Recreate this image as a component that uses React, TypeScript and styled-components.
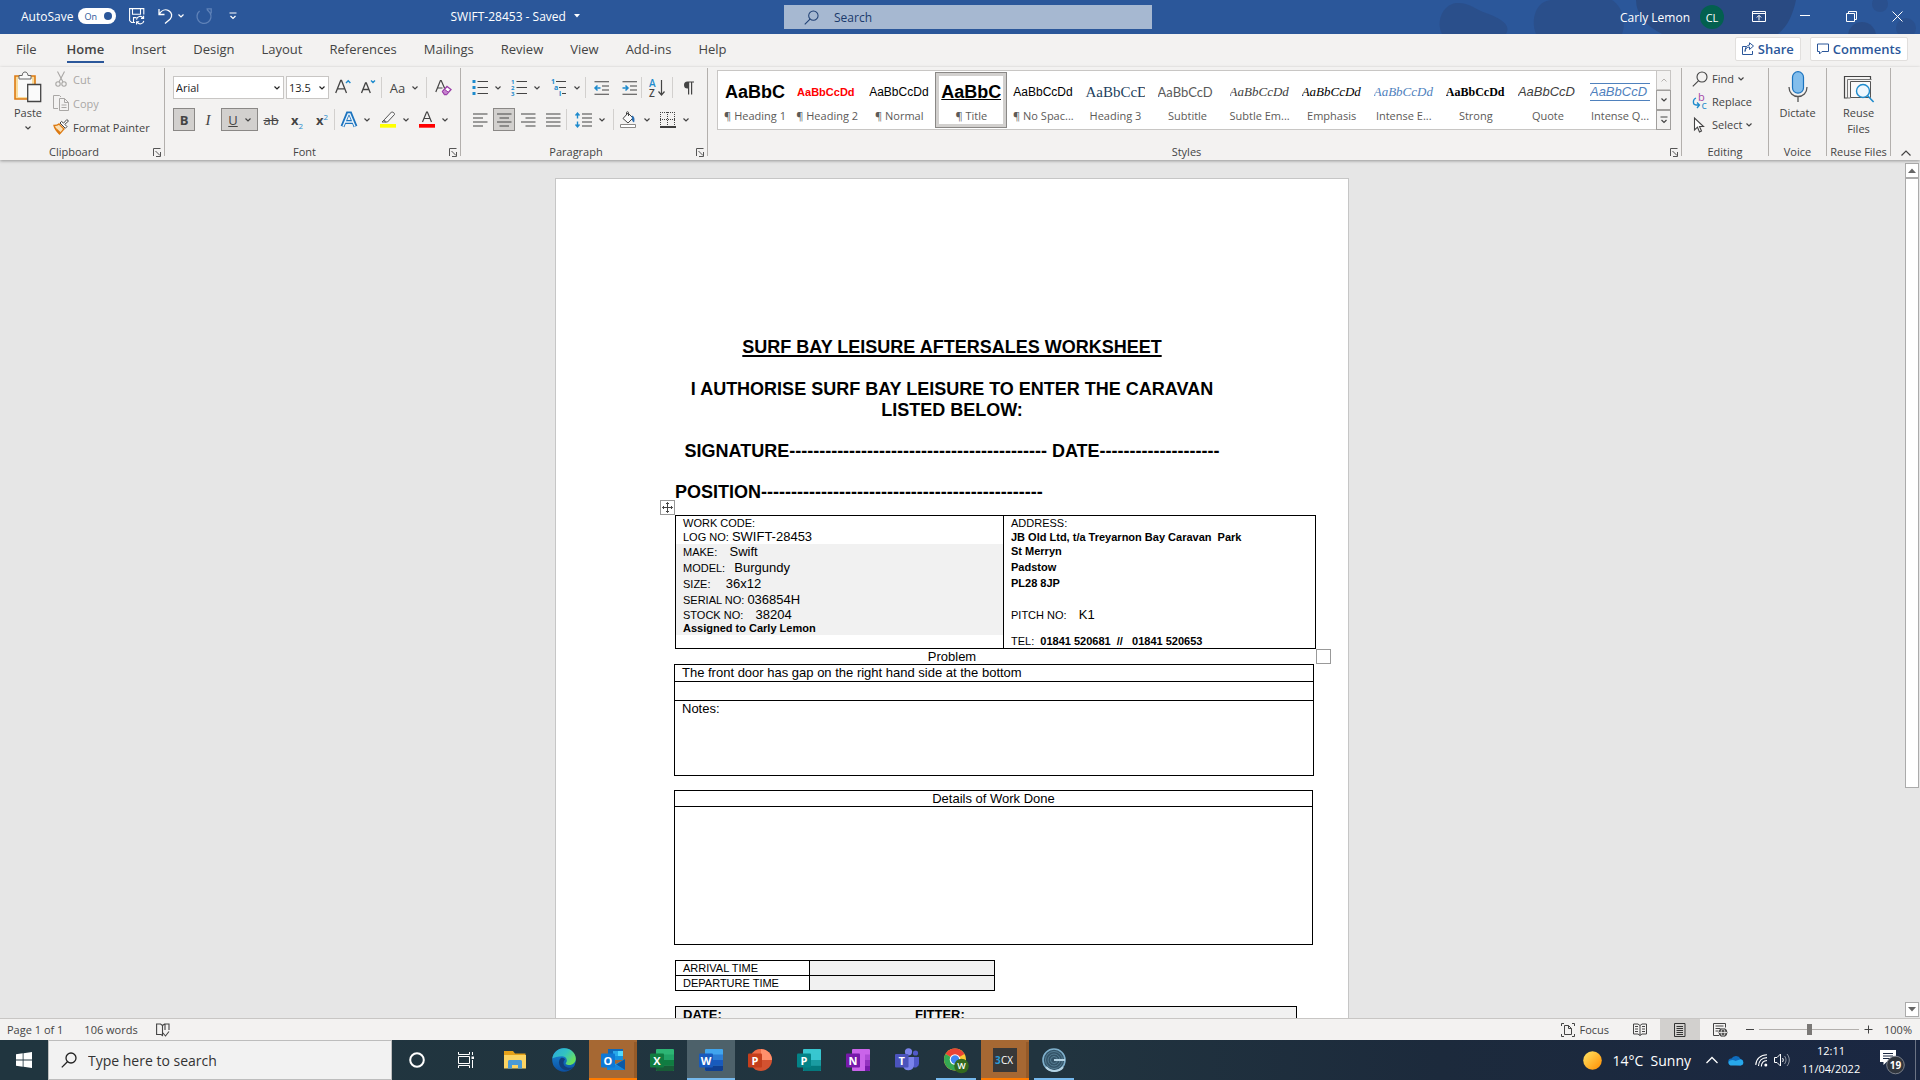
import React from 'react';
import styled, { createGlobalStyle, css } from 'styled-components';

const UI = '"Segoe UI", "Open Sans", "Noto Sans", sans-serif';
const DOC = 'Arial, "Liberation Sans", sans-serif';
const SERIF = '"Liberation Serif", "Times New Roman", serif';
const BLUE = '#2b579a';
const ICON_BLUE = '#1e8bcd';
const INK = '#444444';

const Global = createGlobalStyle`
  *, *::before, *::after { box-sizing: border-box; }
  html, body { margin: 0; padding: 0; }
  body { font-family: ${UI}; font-size: 12px; color: ${INK}; overflow: hidden; }
  button, select, input { font: inherit; color: inherit; margin: 0; }
  button { border: 0; background: none; padding: 0; cursor: default; }
  svg { display: block; flex: none; overflow: visible; }
  p, h1 { margin: 0; }
`;

const Screen = styled.div`
  display: flex;
  flex-direction: column;
  height: 100vh;
`;

/* ---------- title bar ---------- */

const TitleBar = styled.header`
  position: relative;
  display: grid;
  grid-template-columns: 784fr 368fr 768fr;
  align-items: center;
  height: 34px;
  flex: none;
  overflow: hidden;
  background: ${BLUE};
  color: #fff;
`;

const TitleArt = styled.svg`
  position: absolute;
  top: 0;
  right: 0;
`;

const TitleLeft = styled.div`
  display: flex;
  align-items: center;
  padding: 0 8px 2px 21px;
`;

const AutoSave = styled.label`
  display: flex;
  align-items: center;
  gap: 5px;
  margin-right: 12px;
  input {
    position: absolute;
    opacity: 0;
    width: 38px;
    height: 16px;
  }
`;

const Switch = styled.span`
  display: flex;
  align-items: center;
  justify-content: space-between;
  width: 38px;
  height: 16px;
  padding: 0 4px 0 6px;
  border-radius: 8px;
  background: #fff;
  color: ${BLUE};
  font-size: 9px;
  &::after {
    content: '';
    width: 8px;
    height: 8px;
    border-radius: 50%;
    background: ${BLUE};
  }
`;

const QuickButton = styled.button<{ $w: number }>`
  display: flex;
  align-items: center;
  justify-content: center;
  gap: 5px;
  width: ${(p) => p.$w}px;
  height: 32px;
`;

const DocName = styled.button`
  display: flex;
  flex: 1;
  align-items: center;
  justify-content: center;
  gap: 8px;
  height: 32px;
  font-size: 12px;
  white-space: pre;
`;

const SearchBox = styled.label`
  display: flex;
  align-items: center;
  gap: 15px;
  height: 24px;
  padding-left: 20px;
  background: #a6b8d1;
  color: #1f3f73;
  input {
    flex: 1;
    min-width: 0;
    border: 0;
    padding: 0;
    outline: 0;
    background: none;
    font-size: 12px;
  }
  input::placeholder {
    color: #1b3a6c;
    opacity: 1;
  }
`;

const TitleRight = styled.div`
  position: relative;
  display: flex;
  align-items: center;
  justify-content: flex-end;
`;

const Avatar = styled.span`
  display: grid;
  place-items: center;
  width: 24px;
  height: 24px;
  margin: 0 12px 0 10px;
  border-radius: 50%;
  background: #03604f;
  font-size: 11px;
`;

const WindowButton = styled.button`
  display: grid;
  place-items: center;
  width: 46px;
  height: 32px;
  padding-bottom: 2px;
`;

/* ---------- tab strip ---------- */

const TabStrip = styled.nav`
  display: flex;
  align-items: center;
  flex: none;
  height: 33px;
  padding: 0 12px 2px 2px;
  background: #f3f2f1;
`;

const Tab = styled.button<{ $active?: boolean }>`
  height: 27px;
  margin: 0 13px 0 14px;
  font-size: 13px;
  line-height: 24px;
  border-bottom: 2px solid transparent;
  ${(p) =>
    p.$active &&
    css`
      margin-left: 17px;
      font-weight: 600;
      border-bottom-color: ${BLUE};
    `}
`;

const TabActions = styled.div`
  display: flex;
  gap: 9px;
  margin: 0 0 2px auto;
`;

const ActionButton = styled.button`
  display: flex;
  align-items: center;
  gap: 4px;
  height: 24px;
  padding: 0 6px;
  border: 1px solid #e1dfdd;
  border-radius: 2px;
  background: #fff;
  color: ${BLUE};
  font-size: 13px;
  font-weight: 600;
`;

/* ---------- ribbon ---------- */

const Ribbon = styled.section`
  position: relative;
  display: flex;
  flex: none;
  height: 93px;
  padding-top: 1px;
  background: #f3f2f1;
  box-shadow: 0 1px 3px rgba(0, 0, 0, 0.35);
  z-index: 1;
`;

const Group = styled.div<{ $w?: number }>`
  display: flex;
  flex-direction: column;
  ${(p) => (p.$w ? `flex: none; width: ${p.$w}px;` : 'flex: 1; min-width: 0;')}
  height: 88px;
  border-right: 1px solid #b3b0ad;
`;

const GroupBody = styled.div<{ $pad?: string }>`
  display: flex;
  flex: none;
  height: 76px;
  padding: ${(p) => p.$pad || '0'};
`;

const GroupFoot = styled.div<{ $launch?: boolean }>`
  position: relative;
  flex: none;
  height: 16px;
  padding-right: ${(p) => (p.$launch ? 16 : 0)}px;
  font-size: 11px;
  line-height: 16px;
  text-align: center;
  white-space: nowrap;
`;

const Launcher = styled.button`
  position: absolute;
  right: 3px;
  top: 4px;
`;

const Stack = styled.div<{ $gap?: number }>`
  display: flex;
  flex-direction: column;
  gap: ${(p) => p.$gap || 0}px;
`;

const Line = styled.div`
  display: flex;
  align-items: center;
  height: 23px;
`;

const Divider = styled.span`
  width: 1px;
  height: 21px;
  background: #d2d0ce;
`;

const BigButton = styled.button<{ $w: number }>`
  display: flex;
  flex-direction: column;
  align-items: center;
  width: ${(p) => p.$w}px;
  padding-top: 3px;
  font-size: 11px;
  line-height: 16px;
  svg + span { margin-top: 2px; }
  span + svg { margin-top: 4px; }
`;

const SmallButton = styled.button<{ $off?: boolean; $h: number }>`
  display: flex;
  align-items: center;
  gap: 4px;
  height: ${(p) => p.$h}px;
  padding-bottom: 2px;
  font-size: 11px;
  white-space: nowrap;
  color: ${(p) => (p.$off ? '#a9a7a5' : INK)};
`;

const Tool = styled.button<{ $w: number; $on?: boolean }>`
  display: flex;
  align-items: center;
  justify-content: center;
  gap: 7px;
  width: ${(p) => p.$w}px;
  height: 23px;
  font-size: 13px;
  line-height: 20px;
  ${(p) =>
    p.$on &&
    css`
      background: #d2d0ce;
      border: 1px solid #8a8886;
    `}
  i { font-family: ${SERIF}; font-size: 15px; }
  sub, sup {
    font-size: 8px;
    line-height: 0;
    color: ${ICON_BLUE};
  }
`;

const Combo = styled.label<{ $w: number }>`
  display: flex;
  align-items: center;
  width: ${(p) => p.$w}px;
  height: 23px;
  margin-right: 2px;
  padding: 0 3px 0 2px;
  border: 1px solid #c8c6c4;
  background: #fff;
  color: #222;
  select {
    flex: 1;
    min-width: 0;
    border: 0;
    padding: 0;
    outline: 0;
    appearance: none;
    background: none;
    font-size: 11px;
  }
`;

const Gallery = styled.div`
  display: flex;
  align-self: flex-start;
  flex: 1;
  min-width: 0;
  height: 60px;
  border: 1px solid #c8c6c4;
  background: #fff;
`;

const StyleList = styled.div`
  display: flex;
  flex: 1;
  min-width: 0;
  padding: 1px;
`;

const StyleCell = styled.button<{ $on?: boolean }>`
  display: flex;
  flex: 1 1 0;
  min-width: 0;
  flex-direction: column;
  align-items: center;
  justify-content: flex-start;
  padding: 8px 0 0;
  font-size: 11px;
  color: #5c5a58;
  ${(p) =>
    p.$on &&
    css`
      box-shadow: inset 0 0 0 1px #8a8886, inset 0 0 0 4px #d2d0ce;
    `}
`;

const Sample = styled.span<{ $rule?: boolean }>`
  display: block;
  width: 60px;
  height: 24px;
  line-height: 24px;
  overflow: hidden;
  white-space: nowrap;
  text-align: left;
  ${(p) =>
    p.$rule &&
    css`
      height: 18px;
      line-height: 16px;
      margin: 3px 0;
      border-top: 1px solid #4f81bd;
      border-bottom: 1px solid #4f81bd;
    `}
`;

const CellName = styled.span`
  margin-top: 4px;
  line-height: 16px;
  white-space: nowrap;
`;

const GalleryNav = styled.div`
  display: flex;
  flex-direction: column;
  width: 15px;
  margin: -1px;
  button {
    display: grid;
    place-items: center;
    flex: 1;
    border: 1px solid #a19f9d;
    background: #f3f2f1;
  }
  button:first-child { border-color: #c8c6c4; color: #b3b0ad; }
`;

const Collapse = styled.button`
  display: grid;
  place-items: end center;
  width: 29px;
  padding-bottom: 4px;
`;

/* ---------- document ---------- */

const Workspace = styled.main`
  display: flex;
  flex: 1;
  min-height: 0;
  background: #e6e6e6;
`;

const Canvas = styled.div`
  flex: 1;
  display: flex;
  justify-content: center;
  align-items: flex-start;
  overflow: hidden;
  padding-top: 18px;
`;

const Page = styled.article`
  width: 794px;
  min-height: 1123px;
  flex: none;
  padding: 158px 119px 0;
  border: 1px solid #c6c6c6;
  background: #fff;
  color: #000;
  font-family: ${DOC};
  font-size: 13px;
  line-height: 15px;
`;

const Heading = styled.h1`
  margin-bottom: 21px;
  font-size: 18px;
  line-height: 21px;
  font-weight: 700;
  text-align: center;
  text-decoration: underline;
  text-decoration-thickness: 2px;
  text-underline-offset: 2px;
`;

const Statement = styled.p<{ $left?: boolean; $last?: boolean }>`
  margin-bottom: ${(p) => (p.$last ? 12 : 20)}px;
  font-size: 18px;
  line-height: 21px;
  font-weight: 700;
  text-align: ${(p) => (p.$left ? 'left' : 'center')};
  white-space: ${(p) => (p.$left ? 'nowrap' : 'normal')};
`;

const TableFrame = styled.div<{ $w: number; $out?: boolean; $after?: number }>`
  position: relative;
  width: ${(p) => p.$w}px;
  margin-left: ${(p) => (p.$out ? -1 : 0)}px;
  margin-bottom: ${(p) => p.$after || 0}px;
`;

const Table = styled.table`
  width: 100%;
  border-collapse: collapse;
  table-layout: fixed;
`;

const Cell = styled.td<{ $h?: number; $w?: number; $grey?: boolean; $flush?: boolean; $mid?: boolean; $small?: boolean }>`
  height: ${(p) => (p.$h ? `${p.$h}px` : 'auto')};
  width: ${(p) => (p.$w ? `${p.$w}px` : 'auto')};
  padding: ${(p) => (p.$flush ? '0' : '0 7px')};
  border: 1px solid #000;
  vertical-align: top;
  text-align: ${(p) => (p.$mid ? 'center' : 'left')};
  font-size: ${(p) => (p.$small ? 11 : 13)}px;
  line-height: ${(p) => (p.$small ? 14 : 15)}px;
  ${(p) => p.$grey && 'background: #f1f1f1;'}
`;

const Entry = styled.div<{ $h: number; $grey?: boolean; $bold?: boolean }>`
  display: flex;
  align-items: baseline;
  height: ${(p) => p.$h}px;
  padding: 0 7px;
  line-height: ${(p) => p.$h}px;
  font-size: 11px;
  font-weight: ${(p) => (p.$bold ? 700 : 400)};
  white-space: pre;
  ${(p) => p.$grey && 'background: #f1f1f1;'}
`;

const Value = styled.span`
  font-size: 13px;
`;

const Caption = styled.p`
  height: 15px;
  text-align: center;
`;

const SignOff = styled.div`
  display: grid;
  grid-template-columns: 232px 1fr;
  font-weight: 700;
`;

const Handle = styled.span<{ $end?: boolean }>`
  position: absolute;
  display: grid;
  place-items: center;
  width: 15px;
  height: 15px;
  border: 1px solid #999;
  background: #fff;
  ${(p) => (p.$end ? 'left: 100%; top: 100%;' : 'right: 100%; bottom: 100%;')}
`;

const ScrollBar = styled.div`
  display: flex;
  flex-direction: column;
  width: 16px;
  padding: 3px 1px 1px;
  background: #e6e6e6;
`;

const ScrollButton = styled.button`
  display: grid;
  place-items: center;
  height: 15px;
  border: 1px solid #ababab;
  background: #fff;
`;

const ScrollTrack = styled.div`
  flex: 1;
  background: #e6e6e6;
`;

const ScrollThumb = styled.div`
  height: 74%;
  border: 1px solid #ababab;
  background: #fff;
`;

/* ---------- status bar ---------- */

const StatusBar = styled.footer`
  display: flex;
  align-items: center;
  flex: none;
  height: 22px;
  padding: 0 8px 0 7px;
  border-top: 1px solid #c8c6c4;
  background: #f3f2f1;
  font-size: 11px;
`;

const StatusItem = styled.button<{ $gap?: number }>`
  display: flex;
  align-items: center;
  gap: 4px;
  margin-right: ${(p) => p.$gap || 0}px;
`;

const StatusEnd = styled.div`
  display: flex;
  align-items: center;
  margin-left: auto;
`;

const ViewButton = styled.button<{ $on?: boolean }>`
  display: grid;
  place-items: center;
  width: 40px;
  height: 21px;
  background: ${(p) => (p.$on ? '#d2d0ce' : 'none')};
`;

const Zoom = styled.input`
  appearance: none;
  width: 100px;
  height: 12px;
  margin: 0 5px;
  background: linear-gradient(#b3b0ad, #b3b0ad) center / 100% 1px no-repeat;
  &::-webkit-slider-thumb {
    appearance: none;
    width: 5px;
    height: 11px;
    background: #7a7876;
  }
`;

/* ---------- taskbar ---------- */

const TaskBar = styled.footer`
  display: flex;
  flex: none;
  height: 40px;
  background: linear-gradient(90deg, #20353f 0%, #21343f 55%, #1c2a3c 75%, #1a2742 100%);
  color: #fff;
`;

const Start = styled.button`
  display: grid;
  place-items: center;
  width: 48px;
`;

const TaskSearch = styled.label`
  display: flex;
  align-items: center;
  gap: 11px;
  width: 344px;
  padding-left: 12px;
  border: 1px solid #bdbdbd;
  background: #f2f2f2;
  color: #222;
  input {
    flex: 1;
    min-width: 0;
    border: 0;
    padding: 0;
    outline: 0;
    background: none;
    font-size: 14px;
  }
  input::placeholder { color: #333; opacity: 1; }
`;

const TaskButton = styled.button<{ $tone?: 'alert' | 'active' | 'open' }>`
  display: grid;
  place-items: center;
  width: 48px;
  margin-left: 1px;
  border-bottom: 2px solid transparent;
  border-top: 2px solid transparent;
  ${(p) =>
    p.$tone === 'alert' &&
    css`
      background-color: #a66833;
      border-top-color: #a66833;
      border-bottom-color: #ff7b00;
      box-shadow: inset -3px 0 0 #955a28;
    `}
  ${(p) =>
    p.$tone === 'active' &&
    css`
      background-color: #4d616a;
      border-bottom-color: #76b9ed;
    `}
  ${(p) =>
    p.$tone === 'open' &&
    css`
      background: linear-gradient(#76b9ed, #76b9ed) center bottom / 40px 2px no-repeat border-box;
    `}
`;

const Tray = styled.div`
  display: flex;
  align-items: center;
  margin-left: auto;
`;

const Weather = styled.button`
  display: flex;
  align-items: center;
  gap: 10px;
  margin-right: 14px;
  font-size: 14px;
  white-space: pre;
`;

const TrayIcon = styled.button<{ $w: number }>`
  display: grid;
  place-items: center;
  width: ${(p) => p.$w}px;
  height: 40px;
`;

const Clock = styled.button`
  width: 74px;
  font-size: 11px;
  line-height: 18px;
  text-align: center;
`;

const Notify = styled.button`
  display: grid;
  place-items: center;
  width: 48px;
  height: 40px;
  margin-right: 4px;
  border-right: 1px solid #6b7384;
`;

/* ---------- drawings ---------- */

const Chevron = () => (
  <svg width="6" height="6" viewBox="0 0 6 6" fill="none" stroke="currentColor" strokeWidth="1.2">
    <path d="M.5 1.5 3 4 5.5 1.5" />
  </svg>
);

const Magnifier = ({ size = 15, w = 1.1 }: { size?: number; w?: number }) => (
  <svg width={size} height={size} viewBox="0 0 16 16" fill="none" stroke="currentColor" strokeWidth={w}>
    <circle cx="10" cy="6" r="5" />
    <path d="M6.4 9.8.8 15.4" />
  </svg>
);

const SaveIcon = () => (
  <svg width="16" height="17" viewBox="0 0 16 17" fill="none" stroke="#fff" strokeWidth="1.1">
    <path d="M6 14.5H2.5L.6 12.6V.6h14.2v6M3.5.6v5.6h8V.6M4.5 14.5V9.6h3" />
    <path d="M7.5 11.6a3.6 3.6 0 0 1 6.6-1.6M14.6 7.8v2.6H12M14.8 12.8a3.6 3.6 0 0 1-6.6 1.4M7.6 16.4v-2.6h2.6" />
  </svg>
);

const UndoIcon = () => (
  <svg width="15" height="16" viewBox="0 0 15 16" fill="none" stroke="#fff" strokeWidth="1.3">
    <path d="M1 1v5.500h5.500M1.300 6.200C3.500 2.400 7.200.8 10.600 2.600c3.600 2 4 6 1.400 8.600L7 15.400" />
  </svg>
);

const RedoIcon = () => (
  <svg width="16" height="16" viewBox="0 0 16 16" fill="none" stroke="#5f82b8" strokeWidth="1.3">
    <path d="M10.500.8h4.700v4.600M3.600 3A7 7 0 1 0 14 4.800L11 1.500" />
  </svg>
);

const MoreIcon = () => (
  <svg width="8" height="8" viewBox="0 0 8 8" fill="none" stroke="currentColor" strokeWidth="1.2">
    <path d="M.5 1h7M1.500 4 4 6.500 6.500 4" />
  </svg>
);

const LaunchIcon = () => (
  <svg width="8" height="9" viewBox="0 0 8 9" fill="none" stroke="#555">
    <path d="M.5 8V.5h7M2.500 3l4.500 4.500M7.500 4v4.500H3" />
  </svg>
);

const PasteIcon = () => (
  <svg width="28" height="32" viewBox="0 0 28 32" fill="none">
    <path d="M1 5h20v23H1z" fill="#f9dc9c" stroke="#dd7a12" strokeWidth="1.6" />
    <path d="M4 7h14v19H4z" fill="#fafafa" />
    <path d="M5 8V4.500h3.200C8.400 2 9.400 1 11 1s2.700 1 3 3.500h3V8z" fill="#fafafa" stroke="#666" />
    <path d="M13.700 13.500h13v17h-13z" fill="#fafafa" stroke="#444" strokeWidth="1.300" />
  </svg>
);

const CutIcon = () => (
  <svg width="16" height="16" viewBox="0 0 16 16" fill="none" stroke="#a9a7a5" strokeWidth="1.100">
    <path d="M4.500 0.500 10 11M11.500 0.500 6 11" />
    <circle cx="5" cy="13" r="2.200" />
    <circle cx="11" cy="13" r="2.200" />
  </svg>
);

const CopyIcon = () => (
  <svg width="16" height="16" viewBox="0 0 16 16" fill="none" stroke="#a9a7a5">
    <path d="M5 13.500H.5V.5h6l1.500 1.500" />
    <path d="M6.500 3.500h5l4 4v8h-9zM11.500 3.500v4h4M8.500 10h5M8.500 12.500h5" />
  </svg>
);

const PainterIcon = () => (
  <svg width="16" height="16" viewBox="0 0 16 16" fill="none">
    <path d="M1 6.500c3 0 4-.5 5-1.500l5 5c-1 1-2 2.500-4.500 5C4.500 13 2 10.500 1 6.500z" fill="#fbe0b4" stroke="#dd7a12" strokeWidth="1.300" />
    <path d="m3 9 5 4.500-1.500 1.500C4.800 13.600 3.600 12 3 9z" fill="#dd7a12" />
    <path d="m7 4 5.300 5.300 1.700-1.700-2.200-2.200L15.500 2 13.800.6 10.500 4.200 8.600 2.400z" fill="#fff" stroke="#444" />
  </svg>
);

const GrowIcon = ({ shrink }: { shrink?: boolean }) => (
  <svg width="16" height="17" viewBox="0 0 16 17" fill="none">
    <path d={shrink ? 'M1.500 14 5.500 4h.8l4 10M3 10.500h6' : 'M.7 14 5.700 1.500h.8L11.500 14M2.500 9.800h7'} stroke={INK} strokeWidth="1.300" />
    <path d={shrink ? 'M11 1.500 13 3.500l2-2' : 'M11 4 13.200 1.800 15.400 4'} stroke={ICON_BLUE} strokeWidth="1.400" />
  </svg>
);

const EraseIcon = () => (
  <svg width="17" height="17" viewBox="0 0 17 17" fill="none">
    <path d="M.8 13 5.400 1.500h.8l3.500 8M2.500 9h5" stroke={INK} strokeWidth="1.200" />
    <path d="m7.500 12.500 4.500-5 4 3-4.500 5h-2z" fill="#fff" stroke="#9b3fa8" strokeWidth="1.300" />
    <path d="m7.500 12.500 2-2.200 4 3-2 2.200h-2z" fill="#c682cf" stroke="#9b3fa8" />
  </svg>
);

const EffectsIcon = () => (
  <svg width="16" height="16" viewBox="0 0 16 16" fill="none">
    <path d="M1.500 14.500 6.800 1.500h2.400l5.300 13M4 10h8" stroke="#1c74bf" strokeWidth="4" />
    <path d="M2 14.500 7.200 2h1.600L14 14.500M4 10h8" stroke="#eaf4fc" strokeWidth="1.400" />
  </svg>
);

const MarkerIcon = () => (
  <svg width="16" height="17" viewBox="0 0 16 17" fill="none">
    <path d="m4.500 8.500 7-7.500c2 0 3 1 3 2.500l-7 7.500H5z M4.500 8.500 2 11h3.500" stroke="#555" fill="#f6f6f6" />
    <path d="M0 13h16v3.700H0z" fill="#ff0" />
  </svg>
);

const ColorIcon = () => (
  <svg width="16" height="17" viewBox="0 0 16 17" fill="none">
    <path d="M3.500 11 7.600 1h.8l4.100 10M5 7.500h6" stroke={INK} strokeWidth="1.200" />
    <path d="M0 13h16v3.700H0z" fill="#f00" />
  </svg>
);

const ListIcon = ({ kind }: { kind: 'dot' | 'num' | 'multi' }) => (
  <svg width="16" height="17" viewBox="0 0 16 17">
    {kind === 'multi' ? (
      <path d="M5 2.500h10M8 8.500h7M11 14.500h4" stroke={INK} strokeWidth="1.200" />
    ) : (
      <path d="M5.500 2.500H16M5.500 8.500H16M5.500 14.500H16" stroke={INK} strokeWidth="1.200" />
    )}
    {kind === 'dot' && <path d="M.5 1h3v3h-3zM.5 7h3v3h-3zM.5 13h3v3h-3z" fill={ICON_BLUE} />}
    {kind === 'num' && (
      <g fill={ICON_BLUE} fontSize="6" fontWeight="700" fontFamily="Open Sans">
        <text x="0" y="5">1</text>
        <text x="0" y="11">2</text>
        <text x="0" y="17">3</text>
      </g>
    )}
    {kind === 'multi' && (
      <g fill={ICON_BLUE} fontSize="7" fontWeight="700" fontFamily="Open Sans">
        <text x="0" y="5">1</text>
        <text x="3" y="11">a</text>
        <text x="8" y="17">i</text>
      </g>
    )}
  </svg>
);

const IndentIcon = ({ out }: { out?: boolean }) => (
  <svg width="15" height="14" viewBox="0 0 15 14" fill="none">
    <path d="M.5 .7H15M8 5H15M8 9H15M.5 13.300H15" stroke={INK} strokeWidth="1.100" />
    <path d={out ? 'M6.500 7H1M3.500 4.500 1 7l2.500 2.500' : 'M.5 7H6M3.500 4.500 6 7 3.500 9.500'} stroke={ICON_BLUE} strokeWidth="1.500" />
  </svg>
);

const SortIcon = () => (
  <svg width="17" height="18" viewBox="0 0 17 18" fontFamily="Open Sans" fontSize="10" fontWeight="600">
    <text x="0" y="8" fill={ICON_BLUE}>A</text>
    <text x="0" y="17.500" fill={INK}>Z</text>
    <path d="M12.500 1v15M9.500 12.500l3 3.500 3-3.500" fill="none" stroke={INK} strokeWidth="1.200" />
  </svg>
);

const PilcrowIcon = () => (
  <svg width="11" height="14" viewBox="0 0 11 14">
    <path d="M11 .5H4.500a3.500 3.500 0 0 0 0 7H5V13.500h1.200V1.600h1.800v11.900h1.200V1.600H11z" fill={INK} />
  </svg>
);

const alignPaths = {
  left: 'M0 1h14.500M0 5h10M0 9h14.500M0 13h10',
  center: 'M0 1h14.500M2.500 5h9.500M0 9h14.500M2.500 13h9.500',
  right: 'M0 1h14.500M4.500 5h10M0 9h14.500M4.500 13h10',
  full: 'M0 1h14.500M0 5h14.500M0 9h14.500M0 13h14.500',
};

const AlignIcon = ({ kind }: { kind: keyof typeof alignPaths }) => (
  <svg width="15" height="14" viewBox="0 0 15 14" stroke={INK} strokeWidth="1.200">
    <path d={alignPaths[kind]} />
  </svg>
);

const SpacingIcon = () => (
  <svg width="17" height="16" viewBox="0 0 17 16" fill="none">
    <path d="M7 2h10M7 6h10M7 10h10M7 14h10" stroke={INK} strokeWidth="1.100" />
    <path d="M2.500 1v5.500M.5 3.500l2-2.500 2 2.500M2.500 9.500V15M.5 12.500l2 2.500 2-2.500" stroke={ICON_BLUE} strokeWidth="1.400" />
  </svg>
);

const BucketIcon = () => (
  <svg width="17" height="17" viewBox="0 0 17 17" fill="none">
    <path d="m3 7.500 5-5.500 5 5-5 5zM6.500 4V1.500c0-1 2-1 2 0V5" stroke="#444" fill="#fafafa" />
    <path d="M12 4.500c2.500 1 3 4 2 7-2-1-2.500-3-2-7z" fill="#2a6db0" />
    <path d="M.5 13.500h15v3H.5z" fill="#fff" stroke="#8a8886" />
  </svg>
);

const BorderIcon = () => (
  <svg width="16" height="16" viewBox="0 0 16 16" fill="none">
    <path d="M0 .5h15M0 7.500h15M.5 0v14M7.500 0v14M14.500 0v14" stroke={INK} strokeDasharray="1 1" />
    <path d="M0 15h16" stroke="#000" strokeWidth="1.500" />
  </svg>
);

const ReplaceIcon = () => (
  <svg width="16" height="17" viewBox="0 0 16 17" fontFamily="Open Sans" fontSize="11">
    <text x="6" y="8" fill="#a347a8">b</text>
    <text x="9.500" y="16" fill={ICON_BLUE}>c</text>
    <path d="M4 5C.5 6.500.5 12 4 12h3M5 9.500 7.500 12 5 15" fill="none" stroke={ICON_BLUE} strokeWidth="1.300" />
  </svg>
);

const PointerIcon = () => (
  <svg width="16" height="16" viewBox="0 0 16 16" fill="none" stroke="#444" strokeWidth="1.100">
    <path d="M2.500 1v12l3-2.800 2 4.800 2-1-2-4.500h4z" fill="#fff" />
  </svg>
);

const MicIcon = () => (
  <svg width="20" height="32" viewBox="0 0 20 32" fill="none">
    <rect x="4.500" y=".7" width="11" height="21.500" rx="5.500" fill="#83beec" stroke="#1c74bf" strokeWidth="1.200" />
    <path d="M1 16c0 6 4 9.500 9 9.500s9-3.500 9-9.500M10 25.500V31" stroke="#555" strokeWidth="1.300" />
  </svg>
);

const ReuseIcon = () => (
  <svg width="30" height="32" viewBox="0 0 30 32" fill="none">
    <path d="M3.500 27h-3V5.500h26v3" stroke="#444" strokeWidth="1.200" />
    <path d="M6.500 27h-3V8.500h24" stroke="#777" />
    <path d="M6.500 10.500h20v16h-20z" fill="#fafafa" stroke="#555" />
    <circle cx="19" cy="20" r="6.500" fill="#eef7fe" stroke={ICON_BLUE} strokeWidth="1.400" />
    <path d="m23.600 24.800 6 6.200" stroke={ICON_BLUE} strokeWidth="1.600" />
  </svg>
);

const ShareIcon = () => (
  <svg width="12" height="13" viewBox="0 0 12 13" fill="none" stroke={BLUE}>
    <path d="M4 4.500H.5v8h10V9M3 9.500c.5-3 2-4.500 4.500-4.500V7.500L11.500 4 7.500.8V3C4.500 3.200 3 6 3 9.500z" />
  </svg>
);

const CommentIcon = () => (
  <svg width="12" height="12" viewBox="0 0 12 12" fill="none" stroke={BLUE}>
    <path d="M.5 1h11v7.500H5L2.500 11V8.500h-2z" />
  </svg>
);

const Tri = ({ up }: { up?: boolean }) => (
  <svg width="8" height="5" viewBox="0 0 8 5" fill="#666">
    <path d={up ? 'M0 5 4 .5 8 5z' : 'M0 0l4 4.500L8 0z'} />
  </svg>
);

const ProofIcon = () => (
  <svg width="14" height="14" viewBox="0 0 14 14" fill="none" stroke="#444" strokeWidth="1.100">
    <path d="M6.500 2.500v10L5 11.500H.6V1h4zM6.500 2.500 8.500 1h4.500v6M9 1.500V7M6.500 9.500l3 3.500L13 8.500" />
  </svg>
);

const FocusIcon = () => (
  <svg width="14" height="14" viewBox="0 0 14 14" fill="none" stroke="#444">
    <path d="M3 .5H.5V3M11 .5h2.500V3M3 13.500H.5V11M11 13.500h2.500V11" />
    <path d="M3.500 2.500h4l3 3v6h-7zM7.500 2.500v3h3" />
  </svg>
);

const ReadIcon = () => (
  <svg width="14" height="13" viewBox="0 0 14 13" fill="none" stroke="#444">
    <path d="M7 2.500V12.500M.5 1h4.500l2 1.500L9 1h4.500v10H9l-2 1.500L5 11H.5zM2 3.500h3M2 6h3M2 8.500h3M9 3.500h3M9 6h3M9 8.500h3" />
  </svg>
);

const PrintIcon = () => (
  <svg width="12" height="14" viewBox="0 0 12 14" fill="none" stroke="#333">
    <path d="M.5 .5h10.500v13H.5zM2.500 3.500h6.500M2.500 5.500h6.500M2.500 7.500h6.500M2.500 9.500h6.500M2.500 11.500h6.500" />
  </svg>
);

const WebIcon = () => (
  <svg width="15" height="14" viewBox="0 0 15 14" fill="none" stroke="#444">
    <path d="M6 12.500H.5V.5h12v4M2.500 3h8M2.500 5.500h5M2.500 8h3" />
    <circle cx="10" cy="9.500" r="4" fill="#555" />
    <path d="M6 9.500h8M10 5.500c-2.500 2-2.500 6 0 8M10 5.500c2.500 2 2.500 6 0 8" stroke="#f3f2f1" strokeWidth=".8" />
  </svg>
);

const OfficeIcon = ({ letter, tile, shades }: { letter: string; tile: string; shades: string[] }) => (
  <svg width="24" height="24" viewBox="0 0 24 24">
    <rect x="6" y="1" width="18" height="22" rx="1" fill={shades[0]} />
    <rect x="6" y="6.500" width="18" height="5.500" fill={shades[1]} />
    <rect x="6" y="12" width="18" height="5.500" fill={shades[2]} />
    <path d="M6 17.500h18V22a1 1 0 0 1-1 1H7a1 1 0 0 1-1-1z" fill={shades[3]} />
    <rect x="0" y="5.500" width="14" height="14" rx="1" fill={tile} />
    <text x="7" y="16.500" fill="#fff" fontSize="11" fontWeight="700" fontFamily="Open Sans" textAnchor="middle">{letter}</text>
  </svg>
);

const OneNoteIcon = () => (
  <svg width="24" height="24" viewBox="0 0 24 24">
    <rect x="6" y="1" width="18" height="22" rx="1" fill="#ca64ea" />
    <path d="M19 6.500h5V12h-5z" fill="#ae4bd5" />
    <path d="M19 12h5v5.500h-5z" fill="#9332bf" />
    <path d="M19 17.500h5V22a1 1 0 0 1-1 1h-4z" fill="#7719aa" />
    <rect x="0" y="5.500" width="14" height="14" rx="1" fill="#7719aa" />
    <text x="7" y="16.500" fill="#fff" fontSize="11" fontWeight="700" fontFamily="Open Sans" textAnchor="middle">N</text>
  </svg>
);

const OutlookIcon = () => (
  <svg width="24" height="24" viewBox="0 0 24 24">
    <path d="M7 1h15v11H7z" fill="#1068b8" />
    <path d="M12 3h5v5h-5z" fill="#28a8ea" />
    <path d="M17 3h5v5h-5z" fill="#50d9ff" />
    <path d="M12 8h10v4H12z" fill="#1490df" />
    <path d="M6 11l9 5 9-5v11H6z" fill="#28a8ea" />
    <path d="m6 12 18 10H6z" fill="#1784d8" />
    <path d="M24 11v11l-9-5.500z" fill="#0c59a4" />
    <rect x="0" y="5.500" width="14" height="14" rx="1" fill="#0f78d4" />
    <text x="7" y="16.500" fill="#fff" fontSize="11" fontWeight="700" fontFamily="Open Sans" textAnchor="middle">O</text>
  </svg>
);

const PowerPointIcon = () => (
  <svg width="24" height="24" viewBox="0 0 24 24">
    <circle cx="13" cy="12" r="11" fill="#d35230" />
    <path d="M13 1a11 11 0 0 1 11 11H13z" fill="#ff8f6b" />
    <path d="M13 1v11H2A11 11 0 0 1 13 1z" fill="#ed6c47" />
    <rect x="0" y="5.500" width="14" height="14" rx="1" fill="#c43e1c" />
    <text x="7" y="16.500" fill="#fff" fontSize="11" fontWeight="700" fontFamily="Open Sans" textAnchor="middle">P</text>
  </svg>
);

const TeamsIcon = () => (
  <svg width="24" height="24" viewBox="0 0 24 24">
    <circle cx="20.500" cy="5" r="2.600" fill="#5059c9" />
    <circle cx="13.500" cy="3.800" r="3.600" fill="#7b83eb" />
    <path d="M16 9h8v6.500a4 4 0 0 1-6 3.400z" fill="#5059c9" />
    <path d="M8 9h11v8a5.600 5.600 0 0 1-11 1z" fill="#7b83eb" />
    <rect x="0" y="6" width="13.500" height="13.500" rx="1" fill="#4b53bc" />
    <text x="6.700" y="16.500" fill="#fff" fontSize="11" fontWeight="700" fontFamily="Open Sans" textAnchor="middle">T</text>
  </svg>
);

const ChromeIcon = () => (
  <svg width="24" height="24" viewBox="0 0 24 24">
    <circle cx="11" cy="11.500" r="11" fill="#fcc934" />
    <path d="M11 11.500 1.500 6A11 11 0 0 1 20.500 6z" fill="#ea4335" />
    <path d="M11 11.500 1.500 6A11 11 0 0 0 11 22.500l4-7z" fill="#34a853" />
    <circle cx="11" cy="11.500" r="5.300" fill="#fff" />
    <circle cx="11" cy="11.500" r="4.200" fill="#4285f4" />
    <circle cx="17.500" cy="18" r="7.300" fill="#33691e" />
    <text x="17.500" y="21.300" fill="#fff" fontSize="9" fontWeight="600" fontFamily="Open Sans" textAnchor="middle">W</text>
  </svg>
);

const EdgeIcon = () => (
  <svg width="24" height="24" viewBox="0 0 24 24">
    <defs>
      <linearGradient id="edgeTop" x1="0" y1="0" x2="1" y2=".6">
        <stop offset="0" stopColor="#2aa7dc" />
        <stop offset=".55" stopColor="#33c3c0" />
        <stop offset="1" stopColor="#6be05a" />
      </linearGradient>
      <linearGradient id="edgeLow" x1="0" y1="0" x2="0" y2="1">
        <stop offset="0" stopColor="#1b8fdc" />
        <stop offset="1" stopColor="#0c4fa0" />
      </linearGradient>
    </defs>
    <circle cx="12" cy="12" r="11.800" fill="url(#edgeLow)" />
    <path d="M.4 10.500C1 4.500 6 .2 12 .2c7 0 11.800 5 11.800 10.300 0 4-3 6.500-6.500 6.500-2.800 0-4.300-1-3.300-2.200 1.800-2 .8-6.600-4-6.600-4 0-8 1-9.600 2.300z" fill="url(#edgeTop)" />
    <path d="M9 10c-4 3-2 11 5 12.300 3 .2 6-1.300 7.500-3.300-5 2-10-.3-10-4 0-2 1-3 1.500-3.500-.5-1.500-2.500-2.300-4-1.500z" fill="#123f7c" />
  </svg>
);

const FolderIcon = () => (
  <svg width="22" height="20" viewBox="0 0 22 20">
    <path d="M0 1h9l2 2.500h10.500V7H0z" fill="#e6a118" />
    <path d="M0 5h22v13.500H0z" fill="#fcd462" />
    <path d="M4 18.500v-7c0-1 .8-1.500 1.500-1.500h11c.8 0 1.500.6 1.500 1.500v7h-4V15H8v3.500z" fill="#4a9ad6" />
  </svg>
);

const CxIcon = () => (
  <svg width="24" height="24" viewBox="0 0 24 24" fontFamily="Open Sans" fontSize="10">
    <rect width="24" height="24" fill="#383838" />
    <text x="2" y="15.800" fill="#2a9bd6" fontWeight="700">3</text>
    <text x="8" y="15.800" fill="#fff">CX</text>
  </svg>
);

const DialIcon = () => (
  <svg width="24" height="24" viewBox="0 0 24 24" fill="none" stroke="#7fb0cc">
    <circle cx="12" cy="12" r="11" strokeWidth="1.600" fill="#345468" />
    <circle cx="12" cy="12" r="8.500" stroke="#557d93" />
    <circle cx="12" cy="12" r="6" stroke="#557d93" />
    <circle cx="12" cy="12" r="3.500" stroke="#557d93" />
    <path d="M12 12h11M4 19a11 11 0 0 0 17 0" stroke="#b4d3e4" strokeWidth="2" />
  </svg>
);

/* ---------- content ---------- */

const tabs = ['File', 'Home', 'Insert', 'Design', 'Layout', 'References', 'Mailings', 'Review', 'View', 'Add-ins', 'Help'];

type StyleEntry = { name: string; text: string; look: React.CSSProperties; rule?: boolean };

const serifItalic = (color: string): React.CSSProperties => ({ fontFamily: SERIF, fontStyle: 'italic', fontSize: 13, color });
const sans = (more: React.CSSProperties): React.CSSProperties => ({ fontFamily: DOC, fontSize: 12, color: '#000', ...more });

const styleEntries: StyleEntry[] = [
  { name: '¶ Heading 1', text: 'AaBbC', look: sans({ fontSize: 18, fontWeight: 700 }) },
  { name: '¶ Heading 2', text: 'AaBbCcDd', look: sans({ fontSize: 11, fontWeight: 700, color: '#f00' }) },
  { name: '¶ Normal', text: 'AaBbCcDd', look: sans({}) },
  { name: '¶ Title', text: 'AaBbC', look: sans({ fontSize: 18, fontWeight: 700, textDecoration: 'underline' }) },
  { name: '¶ No Spac...', text: 'AaBbCcDd', look: sans({}) },
  { name: 'Heading 3', text: 'AaBbCcD', look: { fontFamily: SERIF, fontSize: 15, color: '#243f60' } },
  { name: 'Subtitle', text: 'AaBbCcD', look: { fontFamily: 'Lato, sans-serif', fontSize: 13, color: '#5a5a5a' } },
  { name: 'Subtle Em...', text: 'AaBbCcDd', look: serifItalic('#404040') },
  { name: 'Emphasis', text: 'AaBbCcDd', look: serifItalic('#000') },
  { name: 'Intense E...', text: 'AaBbCcDd', look: serifItalic('#4f81bd') },
  { name: 'Strong', text: 'AaBbCcDd', look: { fontFamily: SERIF, fontWeight: 700, fontSize: 12, color: '#000' } },
  { name: 'Quote', text: 'AaBbCcD', look: sans({ fontSize: 13, fontStyle: 'italic', color: '#404040' }) },
  { name: 'Intense Q...', text: 'AaBbCcD', look: sans({ fontSize: 13, fontStyle: 'italic', color: '#4f81bd' }), rule: true },
];

const RibbonGroup = ({ label, w, launch, pad, children }: { label: string; w?: number; launch?: boolean; pad?: string; children: React.ReactNode }) => (
  <Group $w={w}>
    <GroupBody $pad={pad}>{children}</GroupBody>
    <GroupFoot $launch={launch}>
      {label}
      {launch && (
        <Launcher aria-label={`${label} settings`}>
          <LaunchIcon />
        </Launcher>
      )}
    </GroupFoot>
  </Group>
);

const Header = () => (
  <TitleBar>
    <TitleArt width="520" height="34" viewBox="0 0 520 34" fill="#294a82">
      <path d="M42 34c-6-12 0-29 14-31 14-1 20 7 30 10 14 5 26 12 20 21z" opacity=".6" />
      <path d="M136 34c-6-14 0-34 16-34h60c12 8 14 24 10 34z" opacity=".6" />
      <path d="M236 0h160c-3 14-8 26-18 34H262c-16-8-26-20-26-34z" />
      <circle cx="462" cy="36" r="14" opacity=".8" />
      <circle cx="480" cy="4" r="8" opacity=".5" />
      <circle cx="506" cy="28" r="10" opacity=".5" />
    </TitleArt>
    <TitleLeft>
      <AutoSave>
        AutoSave
        <input type="checkbox" defaultChecked />
        <Switch>On</Switch>
      </AutoSave>
      <QuickButton $w={18} aria-label="Save"><SaveIcon /></QuickButton>
      <QuickButton $w={50} aria-label="Undo"><UndoIcon /><Chevron /></QuickButton>
      <QuickButton $w={16} aria-label="Redo"><RedoIcon /></QuickButton>
      <QuickButton $w={42} aria-label="Customise toolbar"><MoreIcon /></QuickButton>
      <DocName>
        {'SWIFT-28453 - Saved'}
        <svg width="6" height="4" viewBox="0 0 6 4" fill="#fff"><path d="M0 0h6L3 3.500z" /></svg>
      </DocName>
    </TitleLeft>
    <SearchBox>
      <Magnifier />
      <input type="text" placeholder="Search" aria-label="Search" />
    </SearchBox>
    <TitleRight>
      Carly Lemon
      <Avatar>CL</Avatar>
      <WindowButton aria-label="Ribbon display options">
        <svg width="14" height="11" viewBox="0 0 14 11" fill="none" stroke="#fff"><path d="M.5 .5h13v10H.5zM.5 2.500h13M7 9.500v-5M4.800 6.500 7 4.300l2.200 2.200" /></svg>
      </WindowButton>
      <WindowButton aria-label="Minimise">
        <svg width="10" height="10" viewBox="0 0 10 10" stroke="#fff"><path d="M0 4.500h10" /></svg>
      </WindowButton>
      <WindowButton aria-label="Restore">
        <svg width="11" height="11" viewBox="0 0 11 11" fill="none" stroke="#fff"><path d="M.5 2.500h8v8h-8zM2.500 2.500v-2h8v8h-2" /></svg>
      </WindowButton>
      <WindowButton aria-label="Close">
        <svg width="11" height="11" viewBox="0 0 11 11" stroke="#fff"><path d="m.5.5 10 10M10.500.5l-10 10" /></svg>
      </WindowButton>
    </TitleRight>
  </TitleBar>
);

const RibbonBar = () => (
  <Ribbon>
    <RibbonGroup label="Clipboard" w={165} launch pad="0 0 0 3px">
      <BigButton $w={50}>
        <PasteIcon />
        <span>Paste</span>
        <Chevron />
      </BigButton>
      <Stack>
        <SmallButton $h={24} $off><CutIcon />Cut</SmallButton>
        <SmallButton $h={24} $off><CopyIcon />Copy</SmallButton>
        <SmallButton $h={24}><PainterIcon />Format Painter</SmallButton>
      </Stack>
    </RibbonGroup>

    <RibbonGroup label="Font" w={296} launch pad="8px 0 0 8px">
      <Stack $gap={9}>
        <Line>
          <Combo $w={111}>
            <select aria-label="Font"><option>Arial</option></select>
            <Chevron />
          </Combo>
          <Combo $w={43}>
            <select aria-label="Font size"><option>13.5</option></select>
            <Chevron />
          </Combo>
          <Tool $w={24} aria-label="Grow font"><GrowIcon /></Tool>
          <Tool $w={26} aria-label="Shrink font"><GrowIcon shrink /></Tool>
          <Divider />
          <Tool $w={44}><span>Aa</span><Chevron /></Tool>
          <Divider />
          <Tool $w={32} aria-label="Clear formatting"><EraseIcon /></Tool>
        </Line>
        <Line>
          <Tool $w={22} $on><b>B</b></Tool>
          <Tool $w={26}><i>I</i></Tool>
          <Tool $w={37} $on><u>U</u><Chevron /></Tool>
          <Tool $w={26}><s>ab</s></Tool>
          <Tool $w={26}><span><b>x</b><sub>2</sub></span></Tool>
          <Tool $w={24}><span><b>x</b><sup>2</sup></span></Tool>
          <Divider />
          <Tool $w={40} aria-label="Text effects"><EffectsIcon /><Chevron /></Tool>
          <Tool $w={39} aria-label="Highlight"><MarkerIcon /><Chevron /></Tool>
          <Tool $w={39} aria-label="Font colour"><ColorIcon /><Chevron /></Tool>
        </Line>
      </Stack>
    </RibbonGroup>

    <RibbonGroup label="Paragraph" w={247} launch pad="8px 0 0 6px">
      <Stack $gap={9}>
        <Line>
          <Tool $w={39} aria-label="Bullets"><ListIcon kind="dot" /><Chevron /></Tool>
          <Tool $w={39} aria-label="Numbering"><ListIcon kind="num" /><Chevron /></Tool>
          <Tool $w={40} aria-label="Multilevel list"><ListIcon kind="multi" /><Chevron /></Tool>
          <Divider />
          <Tool $w={31} aria-label="Decrease indent"><IndentIcon out /></Tool>
          <Tool $w={24} aria-label="Increase indent"><IndentIcon /></Tool>
          <Divider />
          <Tool $w={30} aria-label="Sort"><SortIcon /></Tool>
          <Divider />
          <Tool $w={30} aria-label="Show marks"><PilcrowIcon /></Tool>
        </Line>
        <Line>
          <Tool $w={26} aria-label="Align left"><AlignIcon kind="left" /></Tool>
          <Tool $w={22} $on aria-label="Centre"><AlignIcon kind="center" /></Tool>
          <Tool $w={26} aria-label="Align right"><AlignIcon kind="right" /></Tool>
          <Tool $w={25} aria-label="Justify"><AlignIcon kind="full" /></Tool>
          <Divider />
          <Tool $w={46} aria-label="Line spacing"><SpacingIcon /><Chevron /></Tool>
          <Divider />
          <Tool $w={41} aria-label="Shading"><BucketIcon /><Chevron /></Tool>
          <Tool $w={38} aria-label="Borders"><BorderIcon /><Chevron /></Tool>
        </Line>
      </Stack>
    </RibbonGroup>

    <RibbonGroup label="Styles" launch pad="2px 10px 0 9px">
      <Gallery>
        <StyleList>
          {styleEntries.map((s) => (
            <StyleCell key={s.name} $on={s.name === '¶ Title'}>
              <Sample $rule={s.rule} style={s.look}>{s.text}</Sample>
              <CellName>{s.name}</CellName>
            </StyleCell>
          ))}
        </StyleList>
        <GalleryNav>
          <button aria-label="Previous styles"><svg width="6" height="6" viewBox="0 0 6 6" fill="none" stroke="currentColor"><path d="M.5 4.500 3 2l2.500 2.500" /></svg></button>
          <button aria-label="Next styles"><Chevron /></button>
          <button aria-label="All styles"><MoreIcon /></button>
        </GalleryNav>
      </Gallery>
    </RibbonGroup>

    <RibbonGroup label="Editing" w={87} pad="0 0 0 10px">
      <Stack>
        <SmallButton $h={23}><Magnifier size={16} />Find <Chevron /></SmallButton>
        <SmallButton $h={23}><ReplaceIcon />Replace</SmallButton>
        <SmallButton $h={23}><PointerIcon />Select<Chevron /></SmallButton>
      </Stack>
    </RibbonGroup>

    <RibbonGroup label="Voice" w={58}>
      <BigButton $w={57}><MicIcon /><span>Dictate</span></BigButton>
    </RibbonGroup>

    <RibbonGroup label="Reuse Files" w={64}>
      <BigButton $w={63}><ReuseIcon /><span>Reuse<br />Files</span></BigButton>
    </RibbonGroup>

    <Collapse aria-label="Collapse ribbon">
      <svg width="10" height="6" viewBox="0 0 10 6" fill="none" stroke="#444" strokeWidth="1.200"><path d="M.5 5.500 5 1l4.500 4.500" /></svg>
    </Collapse>
  </Ribbon>
);

const Worksheet = () => (
  <Page>
    <Heading>SURF BAY LEISURE AFTERSALES WORKSHEET</Heading>
    <Statement>I AUTHORISE SURF BAY LEISURE TO ENTER THE CARAVAN LISTED BELOW:</Statement>
    <Statement>SIGNATURE{'-'.repeat(43)} DATE{'-'.repeat(20)}</Statement>
    <Statement $left $last>POSITION{'-'.repeat(47)}</Statement>

    <TableFrame $w={641}>
      <Handle>
        <svg width="11" height="11" viewBox="0 0 11 11" fill="none" stroke="#444"><path d="M5.500 .5v10M.5 5.500h10M4 2l1.500-1.500L7 2M4 9l1.500 1.500L7 9M2 4 .5 5.500 2 7M9 4l1.500 1.500L9 7" /></svg>
      </Handle>
      <Table>
        <tbody>
          <tr>
            <Cell $flush $w={328} $h={133}>
              <Entry $h={14}>WORK CODE:</Entry>
              <Entry $h={14}>LOG NO: <Value>SWIFT-28453</Value></Entry>
              <Entry $h={16} $grey>{'MAKE:    '}<Value>Swift</Value></Entry>
              <Entry $h={16} $grey>{'MODEL:   '}<Value>Burgundy</Value></Entry>
              <Entry $h={16} $grey>{'SIZE:     '}<Value>36x12</Value></Entry>
              <Entry $h={15} $grey>{'SERIAL NO: '}<Value>036854H</Value></Entry>
              <Entry $h={15} $grey>{'STOCK NO:    '}<Value>38204</Value></Entry>
              <Entry $h={13} $grey $bold>Assigned to Carly Lemon</Entry>
            </Cell>
            <Cell $flush>
              <Entry $h={14}>ADDRESS:</Entry>
              <Entry $h={14} $bold>{'JB Old Ltd, t/a Treyarnon Bay Caravan  Park'}</Entry>
              <Entry $h={15} $bold>St Merryn</Entry>
              <Entry $h={16} $bold>Padstow</Entry>
              <Entry $h={16} $bold>PL28 8JP</Entry>
              <Entry $h={16} />
              <Entry $h={15}>{'PITCH NO:    '}<Value>K1</Value></Entry>
              <Entry $h={13} />
              <Entry $h={13}>{'TEL:  '}<b>{'01841 520681  //   01841 520653'}</b></Entry>
            </Cell>
          </tr>
        </tbody>
      </Table>
      <Handle $end />
    </TableFrame>

    <Caption>Problem</Caption>

    <TableFrame $w={640} $out $after={14}>
      <Table>
        <tbody>
          <tr><Cell $h={17}>The front door has gap on the right hand side at the bottom</Cell></tr>
          <tr><Cell $h={19} /></tr>
          <tr><Cell $h={75}>Notes:</Cell></tr>
        </tbody>
      </Table>
    </TableFrame>

    <TableFrame $w={639} $out $after={15}>
      <Table>
        <tbody>
          <tr><Cell $h={15} $mid>Details of Work Done</Cell></tr>
          <tr><Cell $h={138} /></tr>
        </tbody>
      </Table>
    </TableFrame>

    <TableFrame $w={320} $after={15}>
      <Table>
        <tbody>
          <tr><Cell $small $h={14} $w={134}>ARRIVAL TIME</Cell><Cell $small $grey /></tr>
          <tr><Cell $small $h={14}>DEPARTURE TIME</Cell><Cell $small $grey /></tr>
        </tbody>
      </Table>
    </TableFrame>

    <TableFrame $w={622}>
      <Table>
        <tbody>
          <tr><Cell $grey $h={40}><SignOff><span>DATE:</span><span>FITTER:</span></SignOff></Cell></tr>
        </tbody>
      </Table>
    </TableFrame>
  </Page>
);

const Status = () => (
  <StatusBar>
    <StatusItem $gap={21}>Page 1 of 1</StatusItem>
    <StatusItem $gap={18}>106 words</StatusItem>
    <StatusItem aria-label="Proofing"><ProofIcon /></StatusItem>
    <StatusEnd>
      <StatusItem $gap={11}><FocusIcon />Focus</StatusItem>
      <ViewButton aria-label="Read mode"><ReadIcon /></ViewButton>
      <ViewButton $on aria-label="Print layout"><PrintIcon /></ViewButton>
      <ViewButton aria-label="Web layout"><WebIcon /></ViewButton>
      <StatusItem aria-label="Zoom out">
        <svg width="14" height="9" viewBox="0 0 14 9" stroke="#444"><path d="M6 4.500h8" /></svg>
      </StatusItem>
      <Zoom type="range" min={0} max={200} defaultValue={102} aria-label="Zoom" />
      <StatusItem $gap={11} aria-label="Zoom in">
        <svg width="9" height="9" viewBox="0 0 9 9" stroke="#444"><path d="M.5 4.500h8M4.500 .5v8" /></svg>
      </StatusItem>
      <StatusItem>100%</StatusItem>
    </StatusEnd>
  </StatusBar>
);

const Tasks = () => (
  <TaskBar>
    <Start aria-label="Start">
      <svg width="16" height="16" viewBox="0 0 16 16" fill="#fff"><path d="M0 2.300 6.700 1.300v6.300H0zM7.500 1.200 16 0v7.600H7.500zM0 8.400h6.700v6.300L0 13.700zM7.500 8.400H16V16l-8.500-1.200z" /></svg>
    </Start>
    <TaskSearch>
      <Magnifier size={16} w={1.3} />
      <input type="text" placeholder="Type here to search" aria-label="Type here to search" />
    </TaskSearch>
    <TaskButton aria-label="Cortana">
      <svg width="16" height="16" viewBox="0 0 16 16" fill="none" stroke="#fff" strokeWidth="2"><circle cx="8" cy="8" r="6.800" /></svg>
    </TaskButton>
    <TaskButton aria-label="Task view">
      <svg width="17" height="16" viewBox="0 0 17 16" fill="none" stroke="#fff"><path d="M.5 0v2.500h11V0M.5 16v-2.500h11V16M.5 4.500h11v7H.5zM14.500 0v3M14.500 8v8" /><path d="M13.500 4.500h2.500v2.500h-2.500z" fill="#fff" stroke="none" /></svg>
    </TaskButton>
    <TaskButton aria-label="File Explorer"><FolderIcon /></TaskButton>
    <TaskButton aria-label="Edge"><EdgeIcon /></TaskButton>
    <TaskButton $tone="alert" aria-label="Outlook"><OutlookIcon /></TaskButton>
    <TaskButton aria-label="Excel"><OfficeIcon letter="X" tile="#107c41" shades={['#2db574', '#21a366', '#107c41', '#185c37']} /></TaskButton>
    <TaskButton $tone="active" aria-label="Word"><OfficeIcon letter="W" tile="#185abd" shades={['#41a5ee', '#2b7cd3', '#185abd', '#103f91']} /></TaskButton>
    <TaskButton aria-label="PowerPoint"><PowerPointIcon /></TaskButton>
    <TaskButton aria-label="Publisher"><OfficeIcon letter="P" tile="#038387" shades={['#38c7d0', '#37c6d0', '#1a9ba1', '#04797d']} /></TaskButton>
    <TaskButton aria-label="OneNote"><OneNoteIcon /></TaskButton>
    <TaskButton aria-label="Teams"><TeamsIcon /></TaskButton>
    <TaskButton $tone="open" aria-label="Chrome"><ChromeIcon /></TaskButton>
    <TaskButton $tone="alert" aria-label="3CX"><CxIcon /></TaskButton>
    <TaskButton $tone="open" aria-label="Dialler"><DialIcon /></TaskButton>
    <Tray>
      <Weather>
        <svg width="19" height="19" viewBox="0 0 19 19">
          <defs><linearGradient id="sun" x1="0" y1="0" x2="1" y2="1"><stop offset="0" stopColor="#ffe566" /><stop offset="1" stopColor="#ff8c00" /></linearGradient></defs>
          <circle cx="9.500" cy="9.500" r="9.300" fill="url(#sun)" />
        </svg>
        {'14°C  Sunny'}
      </Weather>
      <TrayIcon $w={14} aria-label="Hidden icons">
        <svg width="12" height="8" viewBox="0 0 12 8" fill="none" stroke="#fff" strokeWidth="1.300"><path d="M.5 7 6 1.500 11.500 7" /></svg>
      </TrayIcon>
      <TrayIcon $w={34} aria-label="OneDrive">
        <svg width="16" height="11" viewBox="0 0 16 11"><path d="M3 9.500a3 3 0 0 1 .5-6 5 5 0 0 1 9 .5 3.300 3.300 0 0 1 0 6.500z" fill="#0f6cbd" /><path d="M2.500 10.500a2.600 2.600 0 0 1-.3-5C4 4.500 6 5 7.500 6l5-1.800a3.200 3.200 0 0 1 .3 6.300z" fill="#28a8ea" /></svg>
      </TrayIcon>
      <TrayIcon $w={17} aria-label="Network">
        <svg width="13" height="13" viewBox="0 0 13 13" fill="none" stroke="#fff" strokeWidth="1.100"><path d="M.8 11C1 5 5.500.8 12 .8M3.500 12C3.700 7 7 3.700 12 3.600M6.300 12.500C6.500 9 8.500 6.700 12 6.500" /><circle cx="10.800" cy="11" r="1.500" fill="#fff" stroke="none" /></svg>
      </TrayIcon>
      <TrayIcon $w={24} aria-label="Volume">
        <svg width="16" height="14" viewBox="0 0 16 14" fill="none" stroke="#fff"><path d="M.5 4.500H3l3.500-3.500v12L3 9.500H.5zM8.500 5c1 1.300 1 2.700 0 4" /><path d="M10.500 3c2 2.500 2 5.500 0 8M13 1c3 3.500 3 8.500 0 12" opacity=".5" /></svg>
      </TrayIcon>
      <Clock>12:11<br />11/04/2022</Clock>
      <Notify aria-label="19 notifications">
        <svg width="26" height="26" viewBox="0 0 26 26">
          <path d="M1 3h16v12H7.500L4.500 18v-3H1z" fill="#fff" />
          <path d="M4 6.500h10M4 9h10M4 11.500h7" stroke="#1a2742" />
          <circle cx="16.500" cy="18" r="8.800" fill="#30353d" stroke="#7b808a" />
          <text x="16.500" y="22" fill="#fff" fontSize="10" fontWeight="700" fontFamily="Open Sans" textAnchor="middle">19</text>
        </svg>
      </Notify>
    </Tray>
  </TaskBar>
);

export default function App() {
  return (
    <Screen>
      <Global />
      <Header />
      <TabStrip>
        {tabs.map((t) => (
          <Tab key={t} $active={t === 'Home'}>{t}</Tab>
        ))}
        <TabActions>
          <ActionButton><ShareIcon />Share</ActionButton>
          <ActionButton><CommentIcon />Comments</ActionButton>
        </TabActions>
      </TabStrip>
      <RibbonBar />
      <Workspace>
        <Canvas><Worksheet /></Canvas>
        <ScrollBar>
          <ScrollButton aria-label="Scroll up"><Tri up /></ScrollButton>
          <ScrollTrack><ScrollThumb /></ScrollTrack>
          <ScrollButton aria-label="Scroll down"><Tri /></ScrollButton>
        </ScrollBar>
      </Workspace>
      <Status />
      <Tasks />
    </Screen>
  );
}
